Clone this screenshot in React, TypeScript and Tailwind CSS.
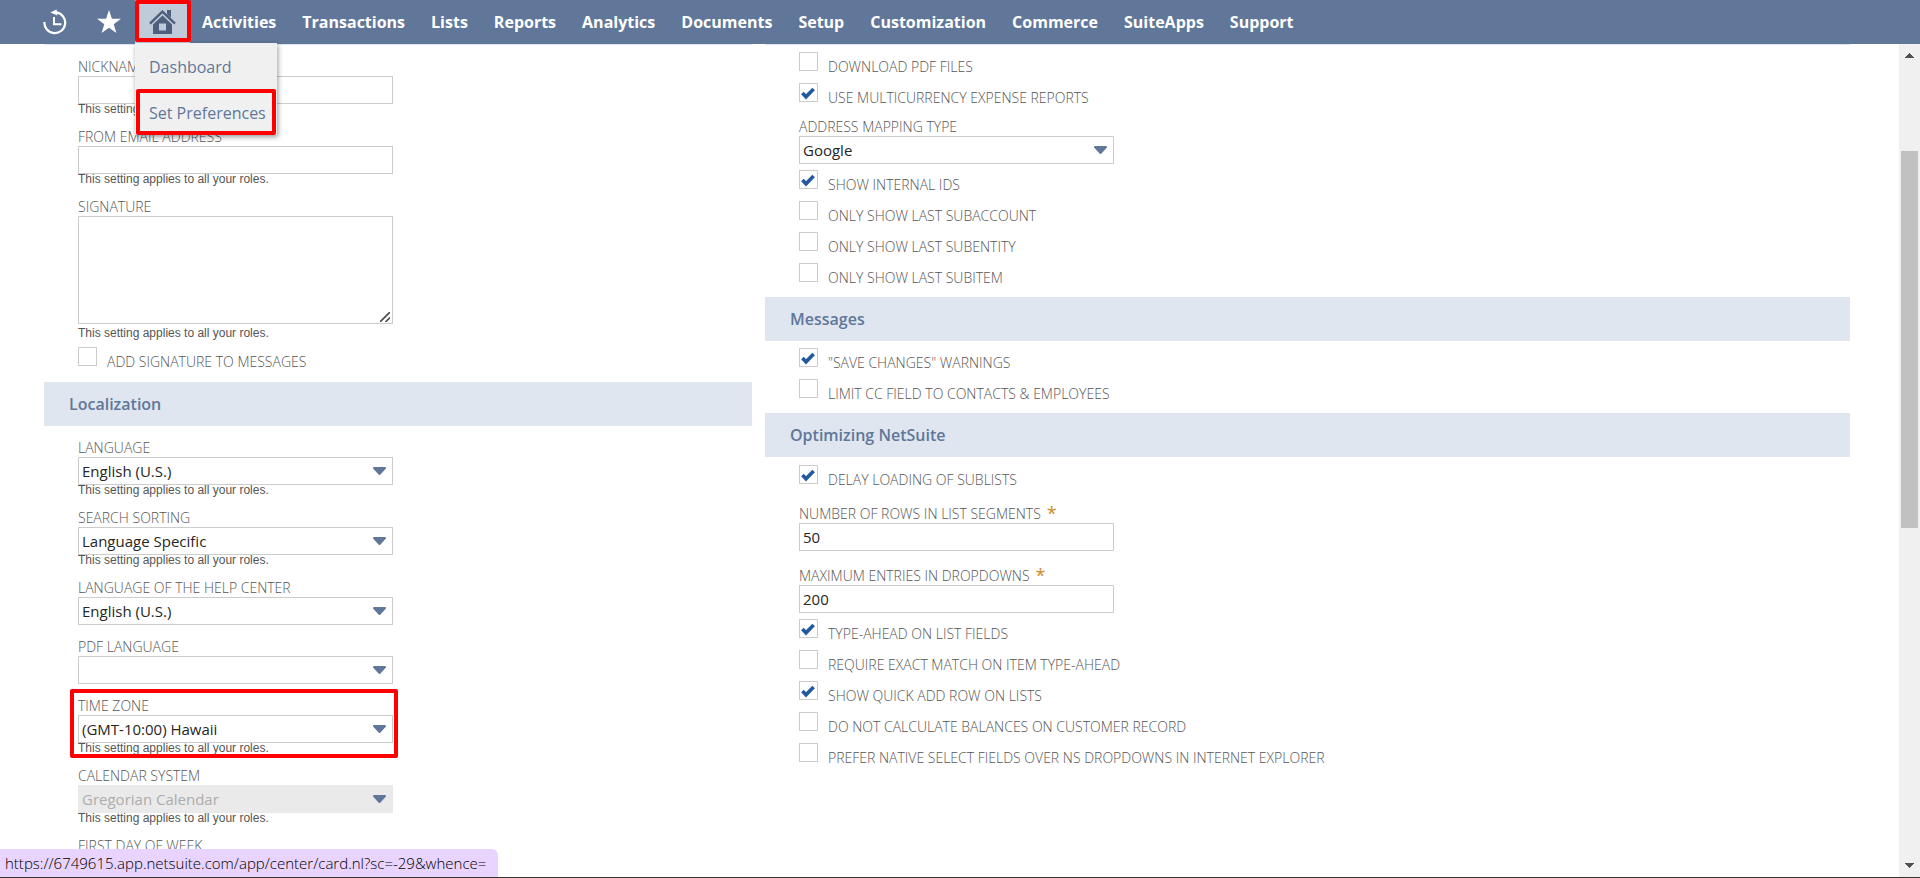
import { useId, type ReactNode } from "react";

const menuItems = [
  "Activities",
  "Transactions",
  "Lists",
  "Reports",
  "Analytics",
  "Documents",
  "Setup",
  "Customization",
  "Commerce",
  "SuiteApps",
  "Support",
];

const labelText = "text-[14px] leading-[18px] text-[#555] uppercase font-light";
const boxText = "h-7 w-full border border-[#ccc] bg-white px-[3px] text-[15px] leading-5 text-[#262626] outline-none";

function Highlight({ className }: { className: string }) {
  return (
    <span
      aria-hidden="true"
      className={`pointer-events-none absolute z-20 rounded-xs border-4 border-[#fe0000] ${className}`}
    />
  );
}

function HistoryIcon() {
  return (
    <svg width="24" height="26" viewBox="0 0 24 26" fill="none" stroke="#fff" aria-hidden="true">
      <path d="M1.4 13 A10.4 10.4 0 1 0 13 3.4" strokeWidth="2.2" />
      <path d="M7.4 3.6 L13.6 .4 L14.4 6.4 Z" fill="#fff" stroke="none" />
      <path d="M11 8 V15.2 H18.4" strokeWidth="2" />
    </svg>
  );
}

function StarIcon() {
  return (
    <svg width="24" height="24" viewBox="0 0 24 24" fill="#fff" aria-hidden="true">
      <path d="M12 0 L14.9 8.8 H24 L16.7 14.2 L19.4 23 L12 17.7 L4.6 23 L7.3 14.2 L0 8.8 H9.1 Z" />
    </svg>
  );
}

function HomeIcon() {
  return (
    <svg width="27" height="24" viewBox="0 0 27 24" fill="#4d5f7d" aria-hidden="true">
      <path d="M18 0 H22 V8 L18 4.2 Z" />
      <path d="M1 13.6 L13.4 1.6 L26 13.6" fill="none" stroke="#4d5f7d" strokeWidth="2.4" />
      <path fillRule="evenodd" d="M13.5 5.6 L23 14.6 V24 H4 V14.6 Z M10 13.5 V20.5 H17 V13.5 Z" />
      <rect x="11" y="14.5" width="5" height="5" fill="#bfcbd9" />
    </svg>
  );
}

function Hint() {
  return (
    <p className="-mt-px font-['Liberation_Sans',Arial,sans-serif] text-[12px] leading-3 text-[#555]">
      This setting applies to all your roles.
    </p>
  );
}

type FieldProps = {
  label: string;
  hint?: boolean;
  required?: boolean;
  highlighted?: boolean;
  children: (id: string) => ReactNode;
};

function Field({ label, hint, required, highlighted, children }: FieldProps) {
  const id = useId();
  return (
    <div className="relative w-[315px]">
      <div className="flex h-[18px] gap-1.5">
        <label htmlFor={id} className={`whitespace-nowrap ${labelText}`}>
          {label}
        </label>
        {required && <span className="text-[18px] leading-4 text-[#d08a25]">*</span>}
      </div>
      {children(id)}
      {hint && <Hint />}
      {highlighted && <Highlight className="-top-2 -right-[5px] -bottom-1 -left-2" />}
    </div>
  );
}

function TextField({ label, value = "", hint, required }: { label: string; value?: string; hint?: boolean; required?: boolean }) {
  return (
    <Field label={label} hint={hint} required={required}>
      {(id) => <input id={id} type="text" defaultValue={value} className={`block ${boxText}`} />}
    </Field>
  );
}

type SelectFieldProps = { label: string; value?: string; hint?: boolean; disabled?: boolean; highlighted?: boolean };

function SelectField({ label, value = "", hint, disabled, highlighted }: SelectFieldProps) {
  return (
    <Field label={label} hint={hint} highlighted={highlighted}>
      {(id) => (
        <div className="relative">
          <select
            id={id}
            disabled={disabled}
            defaultValue={value}
            className={`block appearance-none ${boxText} disabled:border-[#eaeaea] disabled:bg-[#eaeaea] disabled:text-[#adadad] disabled:opacity-100`}
          >
            <option value={value}>{value}</option>
          </select>
          <svg
            width="13"
            height="9"
            viewBox="0 0 13 9"
            aria-hidden="true"
            className="pointer-events-none absolute top-2.5 right-[7px]"
          >
            <path d="M1 1 H12 L6.5 7 Z" fill="#607799" stroke="#607799" strokeWidth="2" strokeLinejoin="round" />
          </svg>
        </div>
      )}
    </Field>
  );
}

function CheckField({ label, checked = false }: { label: string; checked?: boolean }) {
  return (
    <label className="flex items-start gap-2.5">
      <span className="relative inline-flex size-[19px]">
        <input
          type="checkbox"
          defaultChecked={checked}
          className="peer size-[19px] appearance-none border border-[#ccc] bg-white"
        />
        <svg
          width="15"
          height="13"
          viewBox="0 0 15 13"
          fill="none"
          aria-hidden="true"
          className="pointer-events-none absolute top-1 left-0.5 hidden peer-checked:block"
        >
          <path d="M1.4 6 L5 9.8 L12.6 2" stroke="#24599f" strokeWidth="3.6" />
        </svg>
      </span>
      <span className="pt-[5px] text-[14px] leading-5 font-light text-[#555] uppercase">{label}</span>
    </label>
  );
}

function Band({ children }: { children: ReactNode }) {
  return (
    <h2 className="flex h-11 items-center bg-[#dfe6ef] px-[25px] text-[16px] leading-6 font-semibold text-[#607799]">
      {children}
    </h2>
  );
}

function Header() {
  return (
    <header className="relative z-10 flex h-11 shrink-0 items-start bg-[#607799] pl-[43px]">
      <button type="button" aria-label="Recent records" className="mt-[9px]">
        <HistoryIcon />
      </button>
      <button type="button" aria-label="Shortcuts" className="mt-2.5 ml-[30px]">
        <StarIcon />
      </button>
      <div className="relative ml-3.5">
        <a href="#home" aria-label="Home" className="flex h-[43px] w-[55px] items-start justify-center bg-[#bfcbd9] pt-2.5">
          <HomeIcon />
        </a>
        <Highlight className="top-0 -right-px bottom-px left-0" />
        <div className="absolute top-[43px] left-0 flex w-[142px] flex-col bg-[#f0f0f0] shadow-[1px_2px_5px_rgba(0,0,0,0.4)]">
          <a href="#dashboard" className="flex h-[46px] items-center px-3.5 pt-0.5 text-[16px] whitespace-nowrap text-[#607799]">
            Dashboard
          </a>
          <a
            href="#preferences"
            className="relative flex h-[46px] items-center px-3.5 pt-0.5 text-[16px] whitespace-nowrap text-[#607799]"
          >
            Set Preferences
            <Highlight className="inset-x-px top-0 bottom-0" />
          </a>
        </div>
      </div>
      <nav className="ml-3 flex gap-[26px] pt-2.5 text-[16px] leading-6 font-bold whitespace-nowrap text-white">
        {menuItems.map((item) => (
          <a key={item} href={`#${item.toLowerCase()}`}>
            {item}
          </a>
        ))}
      </nav>
    </header>
  );
}

function Scrollbar() {
  return (
    <div aria-hidden="true" className="flex w-[21px] shrink-0 flex-col items-center bg-[#f0f0f0] py-[9px]">
      <svg width="9" height="5" viewBox="0 0 9 5" fill="#505050" shapeRendering="crispEdges">
        <path d="M4 0 H5 L9 5 H0 Z" />
      </svg>
      <div className="flex w-full grow flex-col px-0.5">
        <div className="grow-93" />
        <div className="grow-377 bg-[#c1c1c1]" />
        <div className="grow-335" />
      </div>
      <svg width="9" height="5" viewBox="0 0 9 5" fill="#505050" shapeRendering="crispEdges">
        <path d="M4 5 H5 L9 0 H0 Z" />
      </svg>
    </div>
  );
}

export default function App() {
  const signatureId = useId();
  return (
    <div className="relative flex h-screen flex-col overflow-hidden border-b border-[#3a3330] bg-white font-['Open_Sans',sans-serif]">
      <Header />
      <div className="flex min-h-0 grow">
        <main className="grid min-w-0 grow grid-cols-[708fr_1085fr] gap-x-[13px] overflow-hidden pr-[49px] pl-11">
          <section className="border-t border-[#dfe6ef]">
            <div className="flex flex-col gap-[13px] px-[34px] pt-[13px]">
              <TextField label="Nickname" hint />
              <TextField label="From email address" hint />
              <div className="flex w-[315px] flex-col">
                <label htmlFor={signatureId} className={labelText}>
                  Signature
                </label>
                <div className="relative mb-1">
                  <textarea
                    id={signatureId}
                    className="block h-[108px] w-full resize-none border border-[#ccc] bg-white px-[3px] text-[15px] outline-none"
                  />
                  <svg
                    width="10"
                    height="10"
                    viewBox="0 0 10 10"
                    aria-hidden="true"
                    className="pointer-events-none absolute right-[3px] bottom-0.5"
                  >
                    <path d="M0 10 L10 0 M5.5 10 L10 5.5" stroke="#4a4a4f" strokeWidth="1.6" />
                  </svg>
                </div>
                <Hint />
              </div>
            </div>
            <div className="px-[34px] pt-2 pb-2.5">
              <CheckField label="Add signature to messages" />
            </div>
            <Band>Localization</Band>
            <div className="flex flex-col gap-[13px] px-[34px] pt-[13px]">
              <SelectField label="Language" value="English (U.S.)" hint />
              <SelectField label="Search sorting" value="Language Specific" hint />
              <SelectField label="Language of the help center" value="English (U.S.)" />
              <SelectField label="PDF language" />
              <SelectField label="Time zone" value="(GMT-10:00) Hawaii" hint highlighted />
              <SelectField label="Calendar system" value="Gregorian Calendar" hint disabled />
              <SelectField label="First day of week" value="Sunday" />
            </div>
          </section>

          <section className="border-t border-[#dfe6ef]">
            <div className="flex flex-col gap-1.5 px-[34px] pt-[7px]">
              <CheckField label="Download PDF files" />
              <CheckField label="Use multicurrency expense reports" checked />
            </div>
            <div className="px-[34px] pt-2.5">
              <SelectField label="Address mapping type" value="Google" />
            </div>
            <div className="flex flex-col gap-1.5 px-[34px] pt-1.5 pb-[9px]">
              <CheckField label="Show internal IDs" checked />
              <CheckField label="Only show last subaccount" />
              <CheckField label="Only show last subentity" />
              <CheckField label="Only show last subitem" />
            </div>
            <Band>Messages</Band>
            <div className="flex flex-col gap-1.5 px-[34px] pt-[7px] pb-[9px]">
              <CheckField label={'"Save changes" warnings'} checked />
              <CheckField label="Limit CC field to contacts & employees" />
            </div>
            <Band>Optimizing NetSuite</Band>
            <div className="px-[34px] pt-2 pb-[15px]">
              <CheckField label="Delay loading of sublists" checked />
            </div>
            <div className="flex flex-col gap-4 px-[34px]">
              <TextField label="Number of rows in list segments" value="50" required />
              <TextField label="Maximum entries in dropdowns" value="200" required />
            </div>
            <div className="flex flex-col gap-1.5 px-[34px] pt-1.5">
              <CheckField label="Type-ahead on list fields" checked />
              <CheckField label="Require exact match on item type-ahead" />
              <CheckField label="Show quick add row on lists" checked />
              <CheckField label="Do not calculate balances on customer record" />
              <CheckField label="Prefer native select fields over NS dropdowns in Internet Explorer" />
            </div>
          </section>
        </main>
        <Scrollbar />
      </div>
      <div className="absolute bottom-0 left-0 z-30 rounded-tr-md bg-[#e8d4ff] py-1 pr-3 pl-[5px] text-[15px] leading-5 font-light text-black">
        https://6749615.app.netsuite.com/app/center/card.nl?sc=-29&amp;whence=
      </div>
    </div>
  );
}
